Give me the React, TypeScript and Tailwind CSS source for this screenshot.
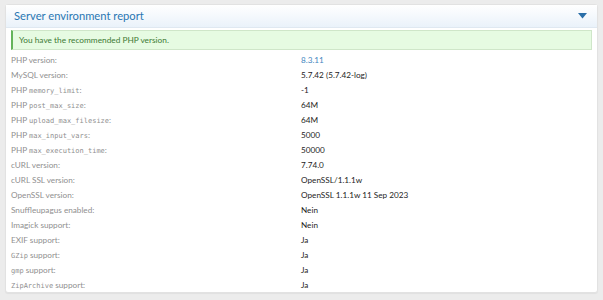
const rows: { label: React.ReactNode; value: string; link?: boolean }[] = [
  { label: "PHP version:", value: "8.3.11", link: true },
  { label: "MySQL version:", value: "5.7.42 (5.7.42-log)" },
  { label: <>PHP <code>memory_limit</code>:</>, value: "-1" },
  { label: <>PHP <code>post_max_size</code>:</>, value: "64M" },
  { label: <>PHP <code>upload_max_filesize</code>:</>, value: "64M" },
  { label: <>PHP <code>max_input_vars</code>:</>, value: "5000" },
  { label: <>PHP <code>max_execution_time</code>:</>, value: "50000" },
  { label: "cURL version:", value: "7.74.0" },
  { label: "cURL SSL version:", value: "OpenSSL/1.1.1w" },
  { label: "OpenSSL version:", value: "OpenSSL 1.1.1w 11 Sep 2023" },
  { label: "Snuffleupagus enabled:", value: "Nein" },
  { label: "Imagick support:", value: "Nein" },
  { label: "EXIF support:", value: "Ja" },
  { label: <><code>GZip</code> support:</>, value: "Ja" },
  { label: <><code>gmp</code> support:</>, value: "Ja" },
  { label: <><code>ZipArchive</code> support:</>, value: "Ja" },
];

export default function App() {
  return (
    <div
      className="w-[603px] h-[300px] bg-[#ececec] pt-[4px] px-[5px]"
      style={{ fontFamily: 'Lato, "Noto Sans", sans-serif' }}
    >
      <div className="bg-white border border-[#e2e2e2] rounded-[3px] h-[289px] shadow-[0_1px_1px_rgba(0,0,0,0.05)]">
        {/* Header */}
        <div className="h-[23px] flex items-center justify-between pl-[8px] pr-[10px] bg-gradient-to-b from-white to-[#eaf2fa] border-b border-[#dfe8f1]">
          <h2 className="text-[11.2px] text-[#2a77b3] leading-none">Server environment report</h2>
          <svg width="9" height="6" viewBox="0 0 9 6">
            <path d="M0 0 H9 L4.5 5.5 Z" fill="#2a6ea8" />
          </svg>
        </div>

        <div className="px-[5px] pt-[2px]">
          {/* Notice */}
          <div className="h-[20px] flex items-center bg-[#e6fbe2] border border-[#cfe6c9] border-l-[2px] border-l-[#64b45a] pl-[6px] text-[8.3px] text-[#3d7a35]">
            You have the recommended PHP version.
          </div>

          {/* Rows */}
          <div className="pt-[3px]">
            {rows.map((r, i) => (
              <div key={i} className="h-[15px] flex items-center text-[8.2px] leading-none">
                <div className="w-[290px] text-[#8f8f8f] [&_code]:font-['DejaVu_Sans_Mono',monospace] [&_code]:text-[7px]">
                  {r.label}
                </div>
                <div className={r.link ? "text-[#3f86c0]" : "text-[#1d1d1d]"}>{r.value}</div>
              </div>
            ))}
          </div>
        </div>
      </div>
    </div>
  );
}
